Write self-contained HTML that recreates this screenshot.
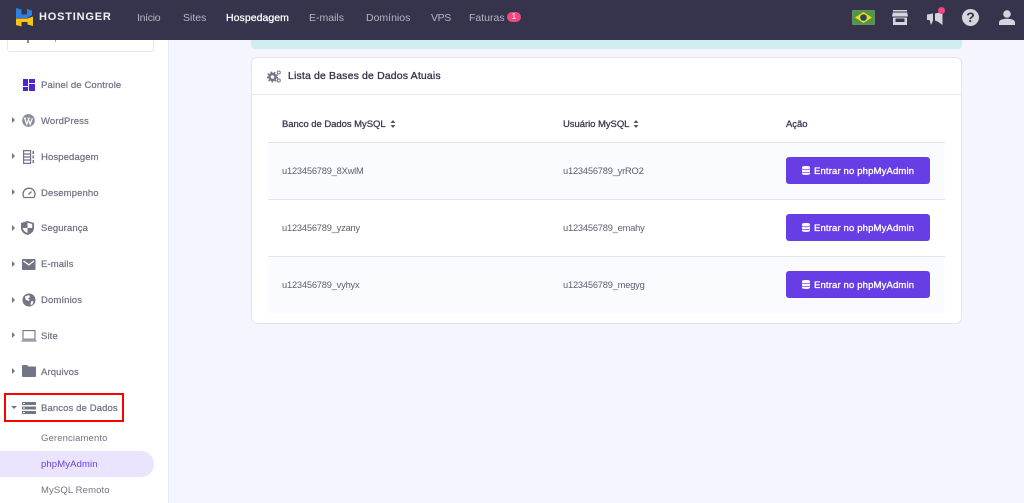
<!DOCTYPE html>
<html lang="pt"><head><meta charset="utf-8"><title>Hostinger</title>
<style>
*{box-sizing:border-box}
html,body{margin:0;padding:0;width:1024px;height:503px;overflow:hidden;background:#f4f5ff;font-family:"Liberation Sans",sans-serif}
.t{position:absolute;white-space:nowrap;line-height:14px;height:14px}
svg{position:absolute;display:block}
#top{position:absolute;left:0;top:0;width:1024px;height:40px;background:#36344d}
.n{font-size:10.5px;color:#b4b3c2;top:11px}
#side{position:absolute;left:0;top:40px;width:169px;height:463px;background:#fff;border-right:1px solid #e8e9f2}
.s{font-size:9.5px;color:#727586;-webkit-text-stroke:.25px #727586;letter-spacing:.12px}
.sub{font-size:9.5px;color:#727586;letter-spacing:.12px}
.h{font-size:9.5px;color:#36344d;-webkit-text-stroke:.25px #36344d;letter-spacing:-.05px}
.c{font-size:9.3px;color:#5c5e6e;letter-spacing:-.2px}
.b{position:absolute;left:786px;width:144px;height:27px;background:#673de6;border-radius:3px}
.bt{font-size:9.5px;color:#fff;-webkit-text-stroke:.3px #fff;left:814px;letter-spacing:.15px}
.ar{position:absolute;left:12px;width:0;height:0;border-left:3.5px solid #727586;border-top:3.5px solid transparent;border-bottom:3.5px solid transparent}
</style></head><body>

<div id="side"></div>
<div style="position:absolute;left:7px;top:30px;width:147px;height:22px;background:#fff;border:1px solid #e6e7ee;border-radius:3px"></div>
<div style="position:absolute;left:27px;top:40px;width:2px;height:3px;background:#8a8b99"></div>
<div style="position:absolute;left:55px;top:40px;width:1px;height:2px;background:#a0a1ae"></div>

<div id="top"></div>
<svg style="left:16px;top:8px" width="18" height="19" viewBox="0 0 18 19"><path fill="#2f7fe0" d="M0 0L5.500 1.500V6.500H11V1L16 2.500V7L11.500 10H0Z"/><path fill="#f7c518" d="M0 10.500H11.500L17 8.500V18L11.500 16.500V14H5.500V18.500L0 17Z"/></svg>
<div class="t" style="left:39px;top:10px;font-size:11px;font-weight:bold;color:#f1f1f5;letter-spacing:.8px">HOSTINGER</div>
<div class="t n" style="left:137px;letter-spacing:-.3px">Início</div>
<div class="t n" style="left:183px">Sites</div>
<div class="t n" style="left:226px;color:#fff;-webkit-text-stroke:.25px #fff;letter-spacing:.05px">Hospedagem</div>
<div class="t n" style="left:309px">E-mails</div>
<div class="t n" style="left:366px">Domínios</div>
<div class="t n" style="left:431px;letter-spacing:-.4px">VPS</div>
<div class="t n" style="left:469px">Faturas</div>
<div style="position:absolute;left:507px;top:12px;width:14px;height:10px;border-radius:5px;background:#f0487e;color:#fff;font-size:8px;line-height:10px;text-align:center">1</div>

<svg style="left:852px;top:10px" width="23" height="15" viewBox="0 0 23 15"><rect width="23" height="15" rx="1.500" fill="#4b9a43"/><rect x=".5" y=".5" width="22" height="14" rx="1" fill="none" stroke="#6b8a6a"/><path fill="#f6d80f" d="M11.500 2l8.500 5.500-8.500 5.500-8.500-5.500z"/><circle cx="11.500" cy="7.500" r="3.300" fill="#26407c"/></svg>
<svg style="left:892px;top:10px" width="16" height="15" viewBox="0 0 16 15"><path fill="#d4d4dc" d="M1 0h14v1.500H1zM.8 2.500h14.400L16 6.500H0zM1 7.500h14V15H1z"/><path fill="#36344d" d="M3.500 8.500h9v3.500h-9z"/></svg>
<svg style="left:927px;top:12px" width="16" height="14" viewBox="0 0 16 14"><path fill="#d4d4dc" d="M0 2.500L6 1.500V8.500L4 13L2.500 8H0ZM8 1.500L15.500 0V13L11.500 10L8 8.500Z"/></svg>
<div style="position:absolute;left:938px;top:7px;width:7px;height:7px;border-radius:50%;background:#f0487e"></div>
<div style="position:absolute;left:962px;top:9px;width:17px;height:17px;border-radius:50%;background:#d4d4dc;color:#36344d;font-size:14px;font-weight:bold;line-height:17px;text-align:center">?</div>
<svg style="left:999px;top:10px" width="16" height="15" viewBox="0 0 16 15"><circle cx="8" cy="4" r="3.800" fill="#d4d4dc"/><path fill="#d4d4dc" d="M0 15v-2.500C0 10 4 8.800 8 8.800s8 1.200 8 3.700V15z"/></svg>

<!-- Sidebar -->
<svg style="left:23px;top:79px" width="12" height="12" viewBox="0 0 12 12"><path fill="#5025d1" d="M0 0h5v7H0zM6 0h6v4H6zM0 8h5v4H0zM6 5h6v7H6z"/></svg>
<div class="t s" style="left:41px;top:79px">Painel de Controle</div>

<div class="ar" style="top:117px"></div>
<svg style="left:22px;top:114px" width="13" height="13" viewBox="0 0 14 14"><circle cx="7" cy="7" r="6.800" fill="#8b8d9b"/><path fill="none" stroke="#fff" stroke-width="1.300" d="M2.800 4.500l2.400 6.500 1.800-5 1.800 5 2.400-6.500M2 4.500h2.500M6 4.500h2.500"/></svg>
<div class="t s" style="left:41px;top:115px">WordPress</div>

<div class="ar" style="top:153px"></div>
<svg style="left:23px;top:150px" width="12" height="14" viewBox="0 0 12 14"><path fill="none" stroke="#727586" stroke-width="1.200" d="M.6.600h7v12.800h-7zM.6 4h7M.6 7h7M.6 10h7"/><path fill="#727586" d="M9.500 1H11v3H9.500zM9.500 5.500H11v3H9.500zM9.500 10H11v3H9.500z"/></svg>
<div class="t s" style="left:41px;top:151px">Hospedagem</div>

<div class="ar" style="top:189px"></div>
<svg style="left:22px;top:186px" width="14" height="13" viewBox="0 0 14 13"><path fill="none" stroke="#727586" stroke-width="1.300" d="M2 11.500A6 6 0 1 1 12 11.500zM6.500 8.500L9.500 5.500"/></svg>
<div class="t s" style="left:41px;top:187px">Desempenho</div>

<div class="ar" style="top:225px"></div>
<svg style="left:21px;top:221px" width="13" height="14" viewBox="0 0 13 14"><path fill="#727586" d="M6.500 0L13 2v5c0 3.500-3 6-6.500 7C3 13 0 10.500 0 7V2z"/><path fill="#fff" d="M6.500 1.800V7h4.700V3zM6.500 7H1.800c.3 2.500 2.300 4 4.700 5z"/></svg>
<div class="t s" style="left:41px;top:222px">Segurança</div>

<div class="ar" style="top:261px"></div>
<svg style="left:22px;top:259px" width="14" height="11" viewBox="0 0 14 11"><rect width="13.500" height="11" rx="1" fill="#727586"/><path fill="none" stroke="#fff" stroke-width="1.300" d="M1.500 2l5.300 3.800L12 2"/></svg>
<div class="t s" style="left:41px;top:258px">E-mails</div>

<div class="ar" style="top:297px"></div>
<svg style="left:22px;top:293px" width="14" height="14" viewBox="0 0 14 14"><circle cx="7" cy="7" r="6.500" fill="#727586"/><path fill="#fff" d="M3 3.500L7 2l1 2-2 1.500 2 1.500-1.500 1-3-1.500zM9 8.500l2.500-.5-1 3.500-2 .5z"/></svg>
<div class="t s" style="left:41px;top:294px">Domínios</div>

<div class="ar" style="top:332px"></div>
<svg style="left:21px;top:330px" width="16" height="12" viewBox="0 0 16 12"><path fill="none" stroke="#727586" stroke-width="1.100" d="M2 .6h12v8.600H2z"/><path fill="#727586" d="M.5 10.300h15V11.500H.5z"/></svg>
<div class="t s" style="left:41px;top:330px">Site</div>

<div class="ar" style="top:368px"></div>
<svg style="left:22px;top:365px" width="14" height="12" viewBox="0 0 14 12"><path fill="#727586" d="M0 1a1 1 0 0 1 1-1h4l1.500 1.500H13a1 1 0 0 1 1 1V11a1 1 0 0 1-1 1H1a1 1 0 0 1-1-1z"/></svg>
<div class="t s" style="left:41px;top:366px">Arquivos</div>

<div style="position:absolute;left:4px;top:393px;width:120px;height:29px;border:2px solid #f00"></div>
<div style="position:absolute;left:11px;top:406px;width:0;height:0;border-top:3.500px solid #727586;border-left:3.500px solid transparent;border-right:3.500px solid transparent"></div>
<svg style="left:22px;top:402px" width="14" height="12" viewBox="0 0 14 12"><path fill="#727586" d="M0 0h14v3H0zM0 4.500h14v3H0zM0 9h14v3H0z"/><path fill="#fff" d="M1 1h2v1H1zM1 5.500h2v1H1zM1 10h2v1H1z"/></svg>
<div class="t s" style="left:41px;top:402px">Bancos de Dados</div>

<div class="t sub" style="left:41px;top:432px">Gerenciamento</div>
<div style="position:absolute;left:0;top:451px;width:154px;height:26px;background:#ebe4ff;border-radius:0 13px 13px 0"></div>
<div class="t sub" style="left:41px;top:458px;color:#673de6">phpMyAdmin</div>
<div class="t sub" style="left:41px;top:484px">MySQL Remoto</div>

<!-- Content -->
<div style="position:absolute;left:251px;top:40px;width:711px;height:9px;background:#d0edf0;border-radius:0 0 4px 4px"></div>
<div style="position:absolute;left:251px;top:57px;width:711px;height:267px;background:#fff;border:1px solid #e3e4ec;border-radius:6px"></div>
<div style="position:absolute;left:252px;top:94px;width:709px;height:1px;background:#e8e9ef"></div>
<svg style="left:267px;top:70px" width="14" height="13" viewBox="0 0 14 13"><circle cx="5.500" cy="7" r="3" fill="none" stroke="#727586" stroke-width="2.400"/><circle cx="5.500" cy="7" r="4.800" fill="none" stroke="#727586" stroke-width="1.400" stroke-dasharray="1.800 1.600"/><circle cx="11.800" cy="2.500" r="1.500" fill="none" stroke="#727586"/><circle cx="11.800" cy="10.500" r="1.500" fill="none" stroke="#727586"/></svg>
<div class="t" style="left:288px;top:69px;font-size:10.5px;color:#36344d;-webkit-text-stroke:.3px #36344d;letter-spacing:.15px">Lista de Bases de Dados Atuais</div>

<div class="t h" style="left:282px;top:118px">Banco de Dados MySQL</div>
<div class="t h" style="left:563px;top:118px">Usuário MySQL</div>
<div class="t h" style="left:786px;top:118px">Ação</div>
<svg style="left:390px;top:120px" width="6" height="8" viewBox="0 0 6 8"><path fill="#55566a" d="M3 0l2.500 3h-5zM3 8L.5 5h5z"/></svg>
<svg style="left:633px;top:120px" width="6" height="8" viewBox="0 0 6 8"><path fill="#55566a" d="M3 0l2.500 3h-5zM3 8L.5 5h5z"/></svg>

<div style="position:absolute;left:268px;top:142px;width:677px;height:58px;background:#fafbff;border-top:1px solid #e3e4ec;border-bottom:1px solid #e3e4ec"></div>
<div style="position:absolute;left:268px;top:256px;width:677px;height:57px;background:#fafbff;border-top:1px solid #e3e4ec"></div>

<div class="t c" style="left:282px;top:164px">u123456789_8XwlM</div>
<div class="t c" style="left:563px;top:164px">u123456789_yrRO2</div>
<div class="t c" style="left:282px;top:221px">u123456789_yzany</div>
<div class="t c" style="left:563px;top:221px">u123456789_emahy</div>
<div class="t c" style="left:282px;top:278px">u123456789_vyhyx</div>
<div class="t c" style="left:563px;top:278px">u123456789_megyg</div>

<div class="b" style="top:157px"></div>
<div class="b" style="top:214px"></div>
<div class="b" style="top:271px"></div>
<svg style="left:802px;top:166px" width="8" height="9" viewBox="0 0 8 9"><path fill="#fff" d="M0 1.200C0 .4 1.800 0 4 0s4 .4 4 1.200v1C8 3 6.200 3.400 4 3.400S0 3 0 2.200zM0 3.400C1 4 2.500 4.200 4 4.200S7 4 8 3.400v1.800c0 .7-1.800 1.100-4 1.100S0 5.900 0 5.200zM0 6.200C1 6.800 2.500 7 4 7s3-.2 4-.8v1.600C8 8.600 6.200 9 4 9S0 8.600 0 7.800z"/></svg>
<svg style="left:802px;top:223px" width="8" height="9" viewBox="0 0 8 9"><path fill="#fff" d="M0 1.200C0 .4 1.800 0 4 0s4 .4 4 1.200v1C8 3 6.200 3.400 4 3.400S0 3 0 2.200zM0 3.400C1 4 2.500 4.200 4 4.200S7 4 8 3.400v1.800c0 .7-1.800 1.100-4 1.100S0 5.900 0 5.200zM0 6.200C1 6.800 2.500 7 4 7s3-.2 4-.8v1.600C8 8.600 6.200 9 4 9S0 8.600 0 7.800z"/></svg>
<svg style="left:802px;top:280px" width="8" height="9" viewBox="0 0 8 9"><path fill="#fff" d="M0 1.200C0 .4 1.800 0 4 0s4 .4 4 1.200v1C8 3 6.200 3.400 4 3.400S0 3 0 2.200zM0 3.400C1 4 2.500 4.200 4 4.200S7 4 8 3.400v1.800c0 .7-1.800 1.100-4 1.100S0 5.900 0 5.200zM0 6.200C1 6.800 2.500 7 4 7s3-.2 4-.8v1.600C8 8.600 6.200 9 4 9S0 8.600 0 7.800z"/></svg>
<div class="t bt" style="top:165px">Entrar no phpMyAdmin</div>
<div class="t bt" style="top:222px">Entrar no phpMyAdmin</div>
<div class="t bt" style="top:279px">Entrar no phpMyAdmin</div>
</body></html>
